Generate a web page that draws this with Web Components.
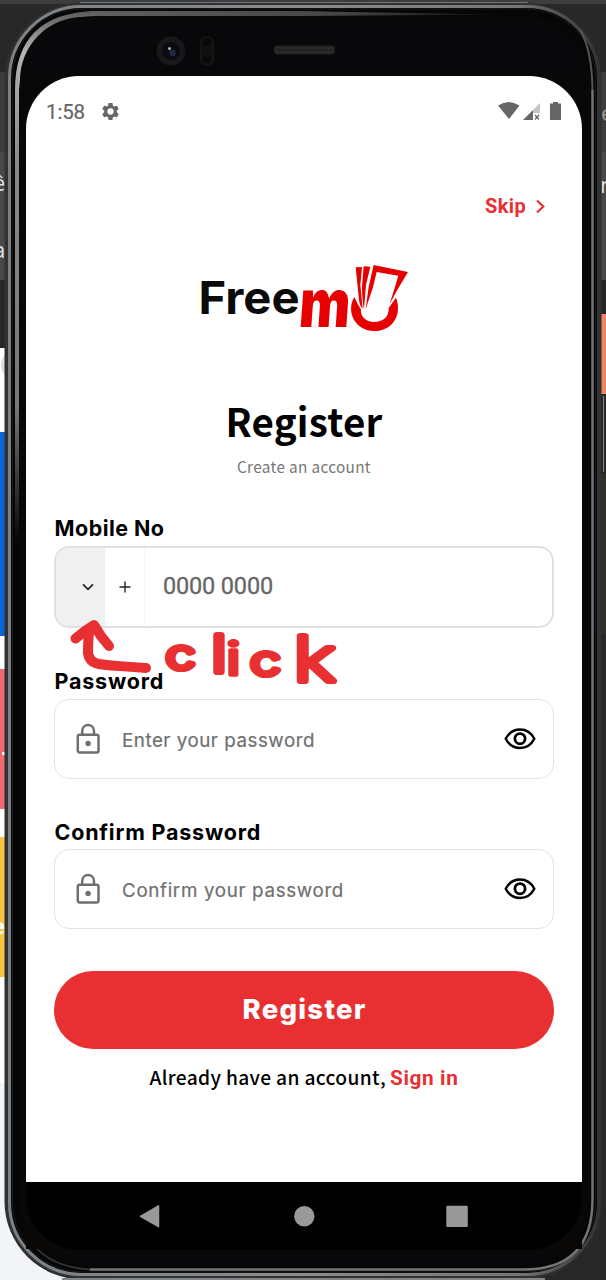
<!DOCTYPE html>
<html lang="en">
<head>
<meta charset="utf-8">
<title>Register</title>
<style>
html,body{margin:0;padding:0;background:#262626}
body{width:606px;height:1280px;overflow:hidden;position:relative;font-family:Inter,sans-serif}
</style>
</head>
<body>
<desktop-backdrop></desktop-backdrop>
<phone-device>
  <status-bar></status-bar>
  <register-page></register-page>
  <nav-bar slot="nav"></nav-bar>
</phone-device>
<ink-note></ink-note>
<script>
const define = (name, html, init) => customElements.define(name, class extends HTMLElement {
  constructor(){ super(); this.attachShadow({mode:'open'}); }
  connectedCallback(){
    this.shadowRoot.innerHTML = typeof html === 'function' ? html(this) : html;
    if (init) init(this);
  }
});

/* A single line of text whose tracking is adjusted so it spans the given width. */
define('fit-text', el => `<style>
  :host{display:block;white-space:pre;width:${el.getAttribute('w')}px;flex:none}
  span{display:inline-block}
</style><span><slot></slot></span>`, el => {
  const s = el.shadowRoot.querySelector('span');
  const n = el.textContent.length;
  const d = (Number(el.getAttribute('w')) - s.getBoundingClientRect().width) / n;
  s.style.letterSpacing = d.toFixed(3) + 'px';
});

/* Windows that show at both sides of the phone. */
define('desktop-backdrop', `<style>
  :host{position:absolute;inset:0;display:flex;justify-content:space-between;background:#282828;overflow:hidden}
  :host::before{content:"";position:absolute;left:0;right:0;top:0;height:4px;background:#3d3d3d}
  .col{display:flex;flex-direction:column;width:100px}
  .col div{flex:none;overflow:hidden;position:relative}
  b{position:absolute;font:22px/24px "Noto Sans",sans-serif;color:#ddd}
</style>
<div class="col">
  <div style="height:72px"></div>
  <div style="height:80px;background:#3c3c3c"></div>
  <div style="height:128px;background:#484848"><b style="left:-7px;top:18px">ê</b><b style="left:-7px;top:85px">a</b></div>
  <div style="height:68px;background:#262626"></div>
  <div style="height:84px;background:#fff"><i style="position:absolute;left:1px;top:2px;width:30px;height:30px;border-radius:50%;background:#ddd"></i></div>
  <div style="height:204px;background:#0866d6"></div>
  <div style="height:33px;background:#fff"></div>
  <div style="height:140px;background:#ee6b72"><i style="position:absolute;left:2px;top:83px;width:4px;height:3px;background:#fff"></i></div>
  <div style="height:28px;background:#fff"></div>
  <div style="height:140px;background:#f6c548"><b style="left:-8px;top:76px;color:#fff;font-weight:bold">e</b></div>
  <div style="height:106px;background:#fff"></div>
  <div style="height:197px;background:#f3f4f6"></div>
</div>
<div class="col" style="align-items:stretch">
  <div style="height:72px"></div>
  <div style="height:80px;background:#3c3c3c"><b style="left:95px;top:28px;color:#999">e</b></div>
  <div style="height:128px;background:#484848"><b style="left:94px;top:20px">n</b></div>
  <div style="height:34px;background:#262626"></div>
  <div style="height:80px;background:#f08468"></div>
  <div style="height:80px;background:#262623"><i style="position:absolute;left:97px;top:2px;width:1px;height:76px;background:#888"></i></div>
  <div style="height:160px;background:#302f2b"></div>
  <div style="height:646px;background:#282828"></div>
</div>`);

define('phone-device', `<style>
  :host{display:flex;flex-direction:column;box-sizing:border-box;position:relative;width:606px;height:1280px;padding:76px 24px 30px 26px}
  .shell{position:absolute;left:0;top:0}
  .screen{position:relative;flex:none;height:1106px;background:#fff;border-radius:53px 53px 0 0;display:flex;flex-direction:column;overflow:hidden}
  .nav{position:relative;flex:none}
</style>
<svg class="shell" width="606" height="1280" viewBox="0 0 606 1280">
  <defs>
    <linearGradient id="rim" gradientUnits="userSpaceOnUse" x1="0" y1="0" x2="606" y2="0">
      <stop offset="0" stop-color="#7c8185"/><stop offset=".5" stop-color="#8a8c8e"/><stop offset=".85" stop-color="#777"/><stop offset="1" stop-color="#2b2e30"/>
    </linearGradient>
    <linearGradient id="glow" gradientUnits="userSpaceOnUse" x1="16" y1="10" x2="16" y2="540">
      <stop offset="0" stop-color="#585858"/><stop offset=".08" stop-color="#b4b4b2"/><stop offset=".3" stop-color="#8a8785"/><stop offset=".75" stop-color="#7a7674"/><stop offset="1" stop-color="#080707"/>
    </linearGradient>
    <linearGradient id="topglow" gradientUnits="userSpaceOnUse" x1="80" y1="0" x2="520" y2="0">
      <stop offset="0" stop-color="#626262"/><stop offset=".6" stop-color="#444"/><stop offset="1" stop-color="#090909"/>
    </linearGradient>
  </defs>
  <rect x="4.500" y="2.500" width="597" height="1277" rx="78" fill="#303132"/>
  <path d="M80 2.500H528" stroke="#777"/>
  <path d="M62 1279H545" stroke="#858585" stroke-width="2"/>
  <rect x="9.500" y="6.500" width="589" height="1268" rx="72" fill="#060607" stroke="url(#rim)" stroke-width="3"/>
  <rect x="12.500" y="9" width="583" height="1263" rx="69" fill="#060607" stroke="#1a1b1c"/>
  <path d="M592.500 90V1200Q592 1269.500 524 1269.500H90" fill="none" stroke="#747474" stroke-width="2.500"/>
  <path d="M90 1269.500Q50 1267 32 1243" fill="none" stroke="#333" stroke-width="2"/>
  <path d="M580 30Q592 50 592.500 90" fill="none" stroke="#555" stroke-width="2"/>
  <path d="M90 11H300Q460 14 520 14.500L300 16H90Z" fill="url(#topglow)"/>
  <path d="M95 11Q15 13 15 90V540H19V90Q24 18 95 16Z" fill="url(#glow)"/>
  <rect x="20" y="17" width="570" height="1249" rx="63" fill="#08080a"/>
  <path d="M26 1170H582V1249H26Z" fill="#0a0806"/>
  <path d="M26 76H90V130H26ZM520 76H582V130H520Z" fill="#0a0806"/>
  <circle cx="171" cy="51" r="14.500" fill="#18181a"/><circle cx="171" cy="51" r="9" fill="#0b0b0f"/>
  <circle cx="172.500" cy="53" r="3.200" fill="#222a4c"/><circle cx="169.500" cy="48.500" r="1.500" fill="#b3b3bd"/>
  <rect x="200.500" y="36.500" width="13" height="29" rx="6" fill="#101012" stroke="#171719"/>
  <circle cx="207" cy="42" r="5" fill="#09090a" stroke="#18181a"/><circle cx="207" cy="59" r="5" fill="#09090a" stroke="#18181a"/>
  <rect x="274" y="45.500" width="61" height="9" rx="4" fill="#232324"/>
  <path d="M276 48H333M276 52H333" stroke="#323232" stroke-width="2" stroke-dasharray="1 1"/>
</svg>
<div class="screen"><slot></slot></div>
<div class="nav"><slot name="nav"></slot></div>`);

define('status-bar', `<style>
  :host{display:flex;align-items:center;height:70px;padding:0 20px 0 20px;color:#666;flex:none;box-sizing:border-box}
  fit-text{font:20.500px/24px Roboto,sans-serif;-webkit-text-stroke:.2px #666;margin-top:1px}
  svg{display:block;flex:none}
  .gear{margin-left:15px}
  .sys{margin-left:auto}
</style>
<fit-text w="39">1:58</fit-text>
<svg class="gear" width="21" height="21" viewBox="0 0 24 24" fill="#666"><path d="M19.140 12.940c.04-.3.06-.61.06-.94 0-.32-.02-.64-.07-.94l2.030-1.580c.18-.14.23-.41.12-.61l-1.920-3.320c-.12-.22-.37-.29-.59-.22l-2.390.96c-.5-.38-1.030-.7-1.620-.94L14.400 2.810c-.04-.24-.24-.41-.48-.41h-3.840c-.24 0-.43.17-.47.41L9.250 5.350c-.59.24-1.130.57-1.620.94l-2.390-.96c-.22-.08-.47 0-.59.22L2.740 8.870c-.12.21-.08.47.12.61l2.030 1.580c-.05.3-.09.63-.09.94s.02.64.07.94l-2.030 1.580c-.18.14-.23.41-.12.61l1.920 3.320c.12.22.37.29.59.22l2.390-.96c.5.38 1.030.7 1.620.94l.36 2.540c.05.24.24.41.48.41h3.840c.24 0 .44-.17.47-.41l.36-2.540c.59-.24 1.130-.56 1.620-.94l2.390.96c.22.08.47 0 .59-.22l1.920-3.320c.12-.22.07-.47-.12-.61zM12 15.600A3.600 3.600 0 1 1 12 8.400a3.600 3.600 0 0 1 0 7.200z"/></svg>
<svg class="sys" width="64" height="20" viewBox="0 0 64 20" fill="#666">
  <path d="M0 4.500Q10.700-2.500 21.500 4.500L11 18Z"/>
  <path d="M42 2V12H35V9Z" fill="#c4c4c4"/><path d="M35 9V19H25Z"/>
  <path d="M37 14L41 18.500M41 14L37 18.500" stroke="#666" stroke-width="1.300"/>
  <path d="M52 2.500H55V1H60V2.500H63V19H52Z"/>
</svg>`);

define('nav-bar', `<style>
  :host{display:flex;height:68px;background:#000;align-items:center;justify-content:center;border-radius:0 0 54px 54px}
  svg{display:block}
</style>
<svg width="556" height="68" viewBox="0 0 556 68" fill="#999">
  <path d="M114.500 34.300L132.500 23.900V44.700Z" stroke="#999" stroke-width="1.500" stroke-linejoin="round"/>
  <circle cx="278.300" cy="34.300" r="10.200"/><rect x="420.300" y="23.800" width="21.500" height="21.300" rx="1.300"/>
</svg>`);

define('brand-logo', `<style>:host{display:block;width:208px;height:68px}svg{display:block;overflow:visible}</style>
<svg width="208" height="68" viewBox="200 264 208 68">
  <text x="198.500" y="313.500" font-family="Inter" font-weight="700" font-size="45.500" textLength="101" lengthAdjust="spacingAndGlyphs" fill="#0a0a0a">Free</text>
  <text transform="translate(298 327) skewX(-4)" x="0" y="0" font-family="Inter" font-weight="900" font-size="67" textLength="51" lengthAdjust="spacingAndGlyphs" fill="#e60000">m</text>
  <g transform="translate(180 250) scale(.33333)" fill="#e60000">
    <path d="M523 141C497 184 525 243 583 243C641 243 667 190 648 143L626 174C628 201 607 216 583 216C557 216 540 199 543 178Q534 165 523 141Z"/>
    <path d="M527 52L546 51L541 105L548 176Q539 168 537 150Z"/>
    <path d="M551 49L571 50L558 105L552 178Q546 150 546 110Z"/>
    <path d="M581 45L684 66L650 123L629 163L655 77L590 66L579 112L557 178L566 110Z"/>
  </g>
</svg>`);

define('field-label', el => `<style>
  :host{display:block;height:28px}
  fit-text{font:700 21.500px/28px Inter,sans-serif;color:#000}
</style><fit-text w="${el.getAttribute('w')}">${el.getAttribute('text')}</fit-text>`);

define('phone-field', `<style>
  :host{display:flex;box-sizing:border-box;height:82px;border:2px solid #e0e0e0;border-radius:15px;overflow:hidden;flex:none;align-items:stretch}
  .code{width:49px;background:#f0f0f0;display:flex;align-items:center;justify-content:center;padding-left:15px;box-sizing:border-box}
  .plus{width:40px;display:flex;align-items:center;justify-content:center;border-right:1px solid #f7f7f7;box-sizing:border-box}
  fit-text{font:400 23.500px/28px Roboto,sans-serif;-webkit-text-stroke:.3px #666;color:#666;margin:24px 0 0 18px}
</style>
<div class="code"><svg width="12" height="8" viewBox="0 0 12 8" fill="none" stroke="#222" stroke-width="1.700"><path d="M1 1.300L6 6.300L11 1.300"/></svg></div>
<div class="plus"><svg width="12" height="12" viewBox="0 0 12 12" stroke="#222" stroke-width="1.400"><path d="M6 .5V11.500M.5 6H11.500"/></svg></div>
<fit-text w="110">0000 0000</fit-text>`);

define('password-field', el => `<style>
  :host{display:flex;box-sizing:border-box;height:80px;border:1px solid #e2e2e2;border-radius:15px;align-items:center;padding:0 17px 0 21px;flex:none}
  svg{display:block;flex:none}
  fit-text{font:400 18.800px/26px Inter,sans-serif;-webkit-text-stroke:.2px #707070;color:#707070;margin:3px 0 0 21px}
  .eye{margin-left:auto}
</style>
<svg width="25" height="32" viewBox="0 0 25 32" fill="none" stroke="#6f6f6f" stroke-width="2.500">
  <rect x="1.800" y="11.800" width="20.700" height="17.700" rx="1.800"/><path d="M6.200 11.500V8.200C6.200 0 18 0 18 8.200V11.500"/><circle cx="12.100" cy="20.500" r="2.700" fill="#6f6f6f" stroke="none"/>
</svg>
<fit-text w="${el.getAttribute('w')}">${el.getAttribute('text')}</fit-text>
<svg class="eye" width="32" height="22" viewBox="0 0 32 22" fill="none" stroke="#000" stroke-width="2.500"><path d="M1.700 10.700C8-1.600 24-1.600 30.300 10.700C24 23 8 23 1.700 10.700Z" stroke-linejoin="round"/><circle cx="16" cy="10.700" r="5.100" stroke-width="2.800"/></svg>`);

define('primary-button', `<style>
  :host{display:flex;height:78px;border-radius:39px;background:#e83032;color:#fff;align-items:center;justify-content:center;flex:none}
  fit-text{font:800 27.500px/36px Inter,sans-serif;margin:-3px 0 0 1px}
</style><fit-text w="124">Register</fit-text>`);

define('register-page', `<style>
  :host{display:flex;flex-direction:column;padding:0 28px;height:1036px;box-sizing:border-box}
  .skip{display:flex;align-items:center;justify-content:flex-end;height:28px;margin-top:46px;padding-right:8px;color:#e83032}
  .skip fit-text{font:700 20px/28px Roboto,sans-serif;margin-right:9px}
  .skip svg{display:block}
  brand-logo{margin:44px 0 0 146px}
  h1,p{margin:0;display:flex;justify-content:center}
  h1{height:56px;margin-top:60px}
  h1 fit-text{font:700 38.500px/56px "Noto Sans CJK JP",sans-serif;color:#000}
  .sub{height:24px;margin-top:6px}
  .sub fit-text{font:400 15.300px/24px "Noto Sans CJK JP",sans-serif;color:#777}
  .foot{height:30px;margin-top:13px}
  .foot fit-text{font:500 19.200px/30px "Noto Sans CJK JP",sans-serif;color:#000}
  .foot .in{font:700 20.800px/32px Roboto,sans-serif;color:#e83032;margin-left:4px}
</style>
<div class="skip"><fit-text w="41">Skip</fit-text><svg width="11" height="15" viewBox="0 0 11 15" fill="none" stroke="#e83032" stroke-width="2.200"><path d="M2 1.500L8.300 7.500L2 13.500"/></svg></div>
<brand-logo></brand-logo>
<h1><fit-text w="157">Register</fit-text></h1>
<p class="sub"><fit-text w="134">Create an account</fit-text></p>
<field-label style="margin:36px 0 0 .5px" text="Mobile No" w="110"></field-label>
<phone-field style="margin-top:4px"></phone-field>
<field-label style="margin:39px 0 0 .5px" text="Password" w="109.500"></field-label>
<password-field style="margin-top:4px" text="Enter your password" w="193"></password-field>
<field-label style="margin:39px 0 0 .5px" text="Confirm Password" w="206.500"></field-label>
<password-field style="margin-top:3px" text="Confirm your password" w="222"></password-field>
<primary-button style="margin-top:42px"></primary-button>
<p class="foot"><fit-text w="236.500">Already have an account,</fit-text><fit-text class="in" w="68.500">Sign in</fit-text></p>`);

/* Handwritten hint laid over the form. */
define('ink-note', `<style>:host{position:absolute;left:66px;top:616px;width:284px;height:76px}svg{display:block;overflow:visible}</style>
<svg width="284" height="76" viewBox="66 616 284 76" fill="none" stroke="#e83032" stroke-width="10" stroke-linecap="round" stroke-linejoin="round">
  <path d="M75.500 638.500Q84 631 94 625Q100 636 109 646M89 631Q88 645 88 653C90 668 103 664 146 668"/>
  <text transform="scale(1.350 1)" font-family="Inter" font-weight="200" stroke-width="6.200" fill="#e83032"><tspan x="123" y="669" font-size="39">c</tspan><tspan x="156.500" y="672" font-size="51">l</tspan><tspan x="167.500" y="675" font-size="45" font-weight="400" stroke-width="3.600">i</tspan><tspan x="185.500" y="675" font-size="40">c</tspan><tspan x="217.500" y="681" font-size="61">k</tspan></text>
</svg>`);
</script>
</body>
</html>
